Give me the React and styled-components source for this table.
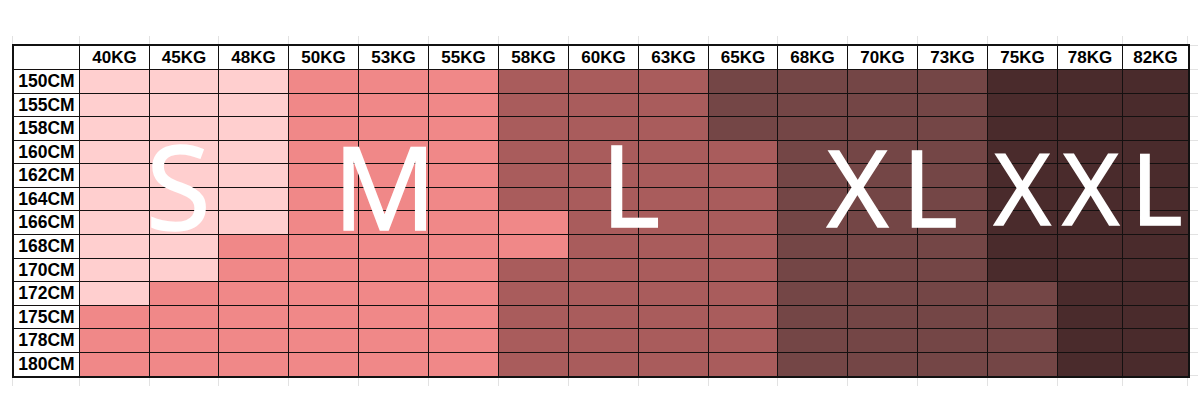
import React from 'react'
import styled, { createGlobalStyle } from 'styled-components'

const WEIGHTS = ['40', '45', '48', '50', '53', '55', '58', '60', '63', '65', '68', '70', '73', '75', '78', '82']

// widths of label column + 16 weight columns (px, right border included)
const COLS = [66, 70, 69, 70, 70, 70, 70, 70, 70, 70, 69, 70, 70, 70, 70, 65, 65]
const ROW_HEIGHTS = [24, 23, 24, 23, 24, 23, 24, 24, 23, 24, 23, 24, 23]

const COLORS = {
  S: '#ffcfcf',
  M: '#f08888',
  L: '#a95c5c',
  X: '#744646',
  XX: '#4a2b2c',
}

const rows = [
  ['150', 'S S S M M M L L L X X X X XX XX XX'],
  ['155', 'S S S M M M L L L X X X X XX XX XX'],
  ['158', 'S S S M M M L L L X X X X XX XX XX'],
  ['160', 'S S S M M M L L L L X X X XX XX XX'],
  ['162', 'S S S M M M L L L L X X X XX XX XX'],
  ['164', 'S S S M M M L L L L X X X XX XX XX'],
  ['166', 'S S S M M M M L L L X X X XX XX XX'],
  ['168', 'S S M M M M M L L L X X X XX XX XX'],
  ['170', 'S S M M M M L L L L X X X XX XX XX'],
  ['172', 'S M M M M M L L L L X X X X XX XX'],
  ['175', 'M M M M M M L L L L X X X X XX XX'],
  ['178', 'M M M M M M L L L L X X X X XX XX'],
  ['180', 'M M M M M M L L L L X X X X XX XX'],
]

const labels = [
  { text: 'S', left: 132, top: 80, size: 118, spacing: 0 },
  { text: 'M', left: 319, top: 82, size: 115, spacing: 0 },
  { text: 'L', left: 587, top: 81, size: 113, spacing: 0 },
  { text: 'XL', left: 813, top: 87, size: 106, spacing: 14 },
  { text: 'XXL', left: 980, top: 92, size: 98, spacing: 12 },
]

const gridCols = COLS.map((w) => `${w}px`).join(' ')
const tickCols = [67, ...COLS.slice(1), 2].map((w) => `${w}px`).join(' ')

function App() {
  return (
    <>
      <GlobalStyle />
      <Page>
        <TickRow>
          {[...Array(COLS.length + 1)].map((_, i) => <VTick key={i} />)}
        </TickRow>

        <Middle>
          <Table>
            <Row $h={24}>
              <HeadCell />
              {WEIGHTS.map((w) => (
                <HeadCell key={w}>{w}KG</HeadCell>
              ))}
            </Row>

            {rows.map(([cm, sizes], i) => (
              <Row key={cm} $h={ROW_HEIGHTS[i]} $last={i === rows.length - 1}>
                <LabelCell>{cm}CM</LabelCell>
                {sizes.split(' ').map((s, j) => (
                  <Cell key={j} $bg={COLORS[s]} />
                ))}
              </Row>
            ))}

            {labels.map((l) => (
              <SizeLabel
                key={l.text}
                $size={l.size}
                $spacing={l.spacing}
                style={{ left: l.left, top: l.top }}
              >
                {l.text.split('').map((ch, k) => (
                  <Glyph key={k}>{ch}</Glyph>
                ))}
              </SizeLabel>
            ))}
          </Table>

          <RightTicks>
            <HTick $h={2} />
            <HTick $h={24} />
            {ROW_HEIGHTS.map((h, i) => (
              <HTick key={i} $h={h} />
            ))}
          </RightTicks>
        </Middle>

        <TickRow>
          {[...Array(COLS.length + 1)].map((_, i) => <VTick key={i} />)}
        </TickRow>
      </Page>
    </>
  )
}

export default App

const GlobalStyle = createGlobalStyle`
  html, body {
    margin: 0;
    background: #ffffff;
  }
  body {
    font-family: "Liberation Sans", Arial, sans-serif;
  }
`

const Page = styled.div`
  display: flex;
  flex-direction: column;
  padding: 36px 0 0 12px;
  width: 1200px;
  height: 400px;
  box-sizing: border-box;
`

const TickRow = styled.div`
  display: grid;
  grid-template-columns: ${tickCols};
  height: 8px;
`

const VTick = styled.div`
  border-left: 1px solid #e2e2e2;
`

const Middle = styled.div`
  display: flex;
  align-items: flex-start;
`

const Table = styled.div`
  position: relative;
  display: flex;
  flex-direction: column;
  border: 2px solid #111;
  box-sizing: content-box;
  width: ${COLS.reduce((a, b) => a + b, 0)}px;
`

const Row = styled.div`
  display: grid;
  grid-template-columns: ${gridCols};
  height: ${(p) => p.$h}px;
  box-sizing: border-box;
  border-bottom: ${(p) => (p.$last ? 'none' : '1px solid #141010')};
`

const Cell = styled.div`
  background: ${(p) => p.$bg};
  border-right: 1px solid #141010;
  &:last-child {
    border-right: none;
  }
`

const HeadCell = styled.div`
  display: flex;
  align-items: center;
  justify-content: center;
  background: #fff;
  border-right: 1px solid #111;
  font-weight: bold;
  font-size: 17px;
  color: #000;
  &:last-child {
    border-right: none;
  }
`

const LabelCell = styled(HeadCell)`
  font-size: 17.5px;
`

const SizeLabel = styled.div`
  position: absolute;
  display: flex;
  gap: ${(p) => p.$spacing}px;
  font-family: "Open Sans", sans-serif;
  font-weight: 400;
  font-size: ${(p) => p.$size}px;
  line-height: 1;
  color: #fff;
  -webkit-text-stroke: 1.6px #fff;
  white-space: nowrap;
  pointer-events: none;
`

const Glyph = styled.span``

const RightTicks = styled.div`
  display: flex;
  flex-direction: column;
  width: 8px;
`

const HTick = styled.div`
  height: ${(p) => p.$h}px;
  box-sizing: border-box;
  border-bottom: 1px solid #e2e2e2;
`
